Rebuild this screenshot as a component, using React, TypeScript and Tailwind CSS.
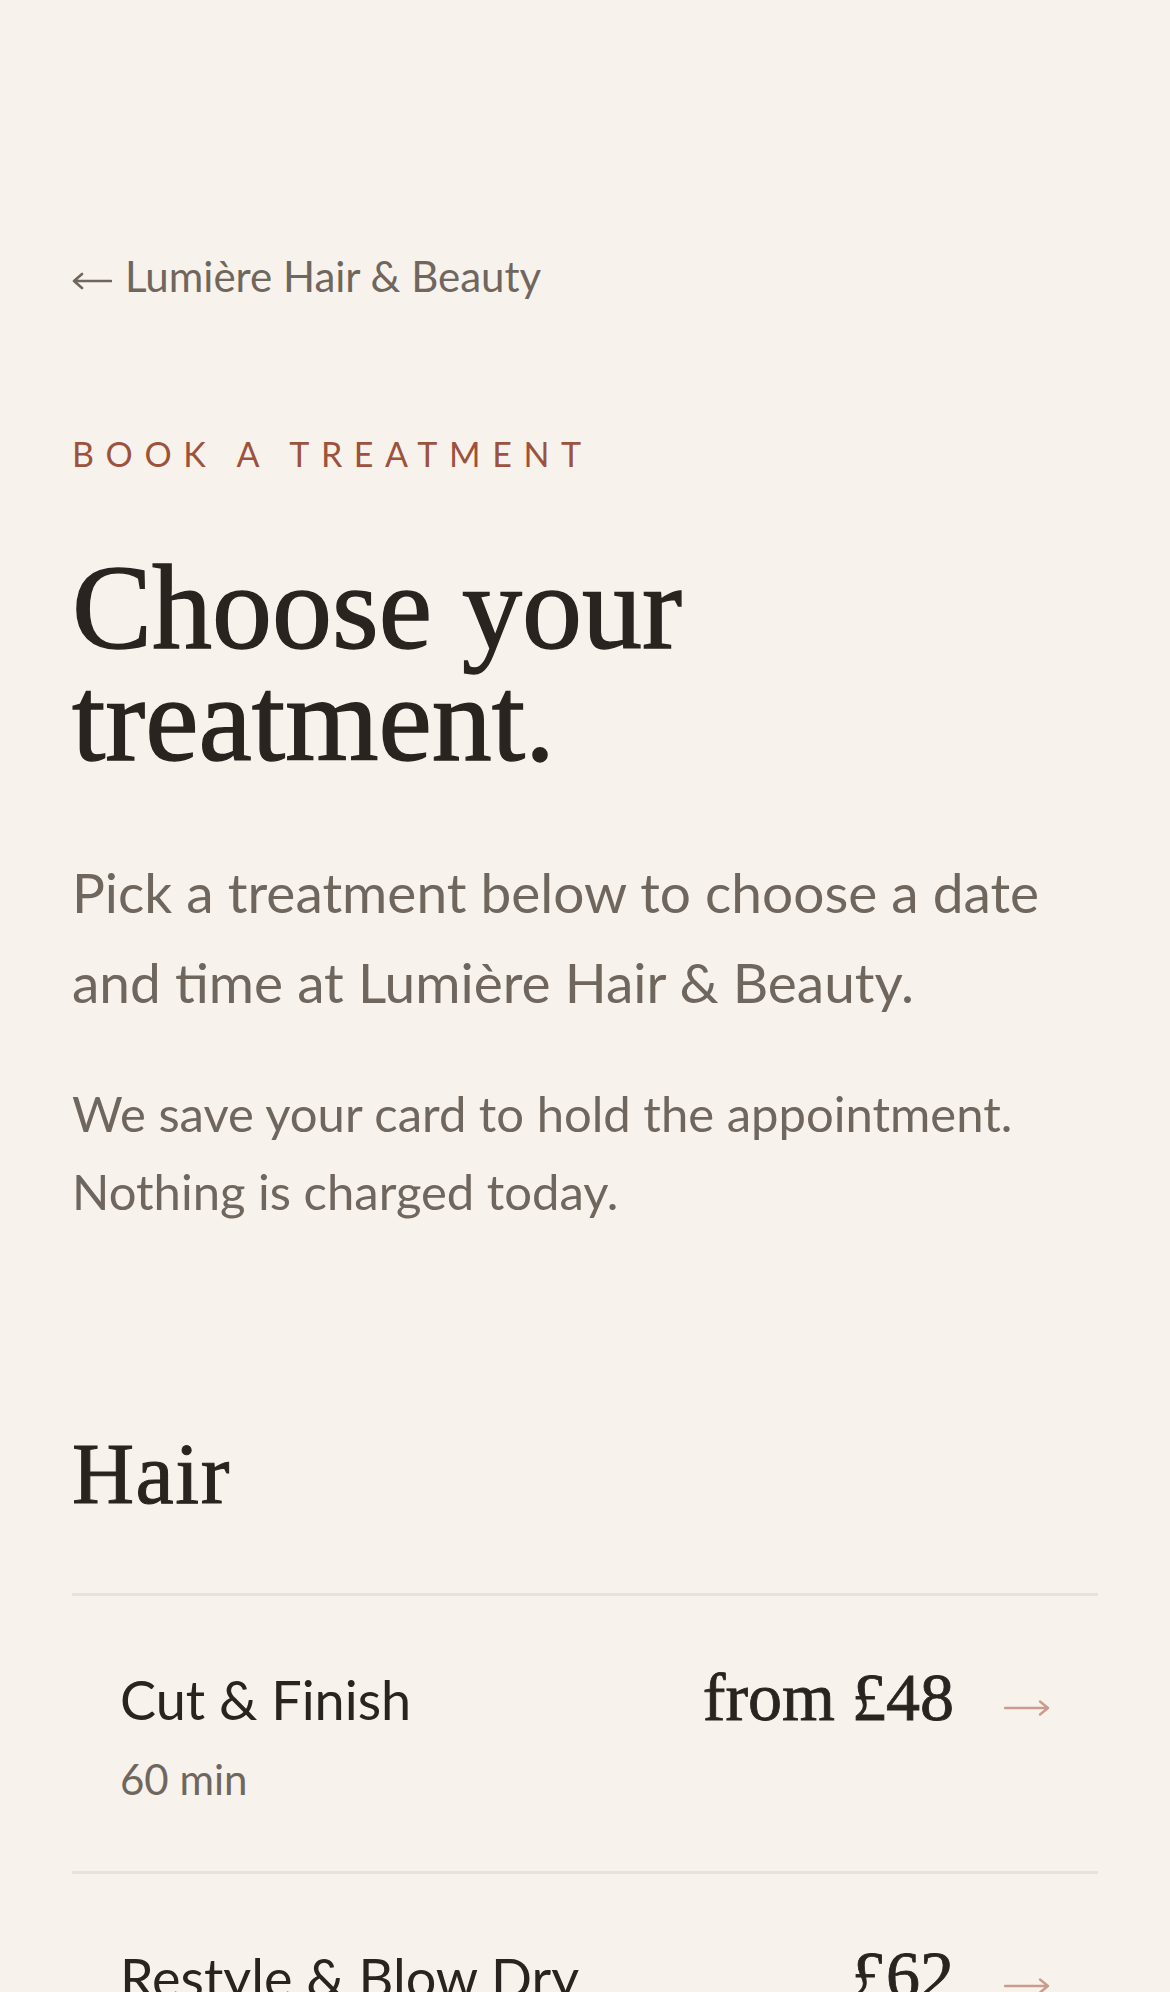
import React from 'react';

interface Treatment {
  name: string;
  duration: string;
  price: string;
}

const hair: Treatment[] = [
  { name: 'Cut & Finish', duration: '60 min', price: 'from £48' },
  { name: 'Restyle & Blow Dry', duration: '45 min', price: '£62' },
  { name: 'Full Head Colour', duration: '120 min', price: 'from £95' },
];

function ArrowRight() {
  return (
    <svg width="46" height="24" viewBox="0 0 46 24" fill="none" className="shrink-0">
      <path d="M1 12H44M36 5.5L44 12L36 18.5" stroke="#c99c8e" strokeWidth="2.4" strokeLinecap="round" strokeLinejoin="round" />
    </svg>
  );
}

function ArrowLeft() {
  return (
    <svg width="40" height="22" viewBox="0 0 40 22" fill="none" className="shrink-0">
      <path d="M39 11H2M10 4L2 11L10 18" stroke="#6f675e" strokeWidth="2.6" strokeLinecap="round" strokeLinejoin="round" />
    </svg>
  );
}

function TreatmentRow({ t }: { t: Treatment }) {
  return (
    <div className="border-t-[3px] border-[#e8e2d8] px-[48px] pt-[65px] pb-[67px] flex items-baseline justify-between">
      <div className="flex flex-col">
        <span className="text-[54px] leading-[64px] text-[#2a2420]">{t.name}</span>
        <span className="mt-[22px] text-[42px] leading-[50px] text-[#6f675e]">{t.duration}</span>
      </div>
      <div className="flex items-baseline gap-[50px]">
        <span className="font-['Liberation_Serif','DejaVu_Serif',serif] text-[68px] leading-[72px] text-[#2a2420] [-webkit-text-stroke:0.8px_#2a2420]">
          {t.price}
        </span>
        <ArrowRight />
      </div>
    </div>
  );
}

export default function App() {
  return (
    <div className="min-h-screen bg-[#f8f2ec] px-[72px] pt-[252px] pb-[120px] font-['Lato','Noto_Sans',sans-serif]">
      <a href="#" className="flex items-baseline gap-[13px] text-[42px] leading-[48px] text-[#6f675e]">
        <ArrowLeft />
        <span>Lumière Hair &amp; Beauty</span>
      </a>

      <p className="mt-[134px] text-[34px] leading-[40px] tracking-[11.6px] uppercase text-[#9c523c]">
        Book a treatment
      </p>

      <h1 className="mt-[78px] font-['Liberation_Serif','DejaVu_Serif',serif] text-[120px] leading-[112px] text-[#2a2420] [-webkit-text-stroke:1.4px_#2a2420]">
        Choose your
        <br />
        treatment.
      </h1>

      <p className="mt-[71px] text-[55px] leading-[90px] text-[#6f675e] max-w-[1010px]">
        Pick a treatment below to choose a date and time at Lumière Hair &amp; Beauty.
      </p>

      <p className="mt-[47px] text-[49px] leading-[78px] text-[#6f675e] max-w-[1010px]">
        We save your card to hold the appointment. Nothing is charged today.
      </p>

      <section className="mt-[198px]">
        <h2 className="font-['Liberation_Serif','DejaVu_Serif',serif] text-[86px] leading-[92px] tracking-[1.5px] text-[#2a2420] [-webkit-text-stroke:1px_#2a2420]">
          Hair
        </h2>
        <div className="mt-[73px] border-b-[3px] border-[#e8e2d8]">
          {hair.map((t) => (
            <TreatmentRow key={t.name} t={t} />
          ))}
        </div>
      </section>
    </div>
  );
}
